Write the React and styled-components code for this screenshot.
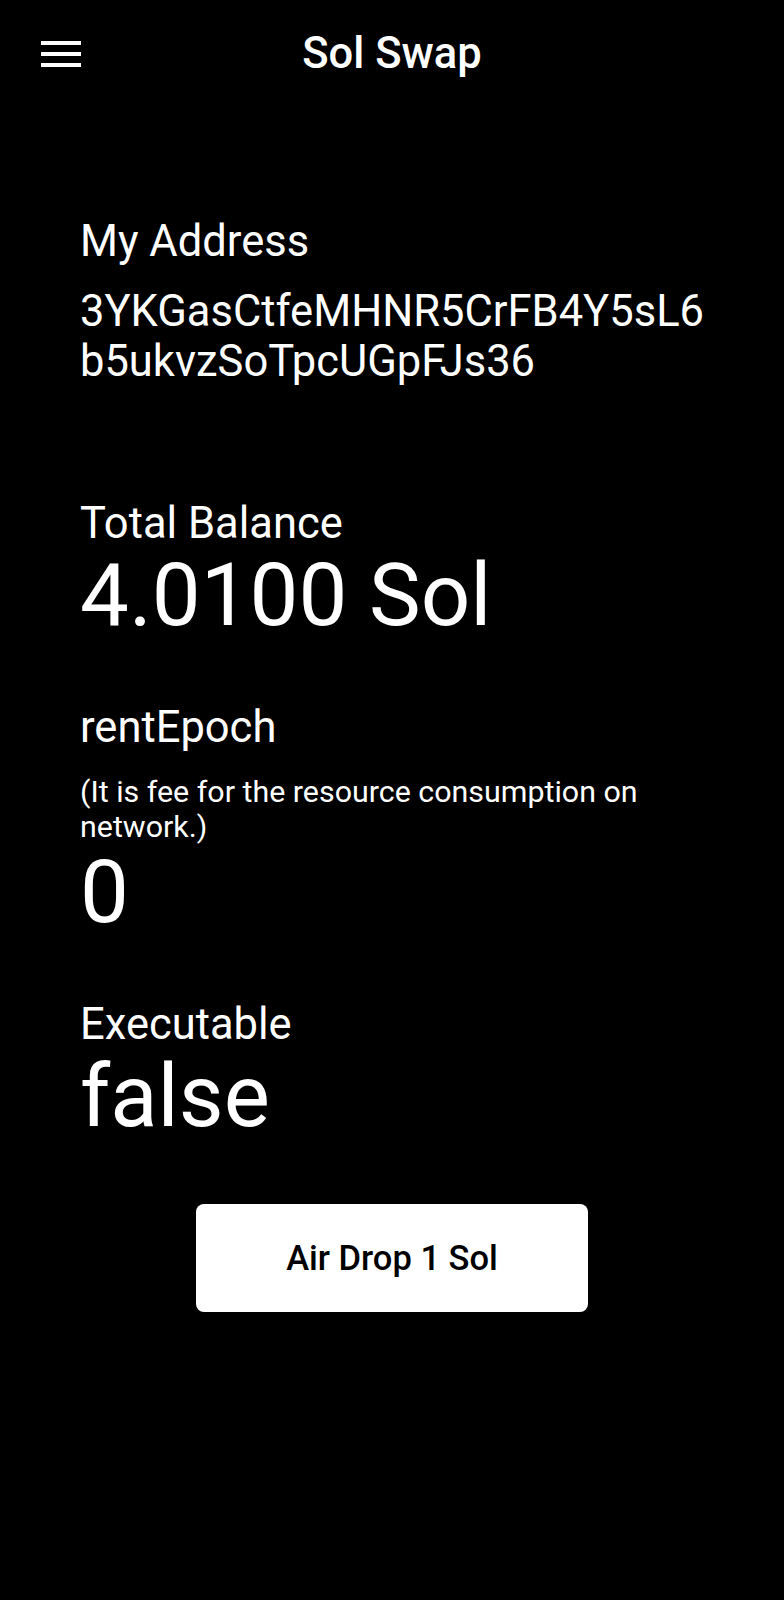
import React from "react";
import styled, { createGlobalStyle } from "styled-components";

const GlobalStyle = createGlobalStyle`
  html, body {
    margin: 0;
    padding: 0;
    background: #000000;
  }
  body {
    font-family: Roboto, "Noto Sans", "Liberation Sans", sans-serif;
    color: #ffffff;
  }
`;

const account = {
  address: "3YKGasCtfeMHNR5CrFB4Y5sL6b5ukvzSoTpcUGpFJs36",
  balance: "4.0100 Sol",
  rentEpoch: 0,
  executable: false,
};

const MenuIcon = () => (
  <svg width="40" height="26" viewBox="0 0 40 26">
    <rect x="0" y="0" width="40" height="4" fill="#fff" />
    <rect x="0" y="11" width="40" height="4" fill="#fff" />
    <rect x="0" y="22" width="40" height="4" fill="#fff" />
  </svg>
);

const App = () => {
  return (
    <Page>
      <GlobalStyle />
      <Header>
        <MenuButton aria-label="menu">
          <MenuIcon />
        </MenuButton>
        <Title>Sol Swap</Title>
      </Header>
      <Content>
        <Section $spacing="112px">
          <Label>My Address</Label>
          <Address>{account.address}</Address>
        </Section>
        <Section $spacing="64px">
          <Label>Total Balance</Label>
          <BigValue>{account.balance}</BigValue>
        </Section>
        <Section $spacing="64px">
          <Label>rentEpoch</Label>
          <Note>(It is fee for the resource consumption on network.)</Note>
          <BigValue $tight>{account.rentEpoch}</BigValue>
        </Section>
        <Section $spacing="64px">
          <Label>Executable</Label>
          <BigValue>{String(account.executable)}</BigValue>
        </Section>
        <ButtonRow>
          <AirDropButton>Air Drop 1 Sol</AirDropButton>
        </ButtonRow>
      </Content>
    </Page>
  );
};

export default App;

const Page = styled.div`
  min-height: 1600px;
  background: #000;
`;

const Header = styled.header`
  position: relative;
  height: 108px;
  display: flex;
  align-items: center;
  justify-content: center;
`;

const MenuButton = styled.button`
  position: absolute;
  left: 41px;
  top: 41px;
  padding: 0;
  border: 0;
  background: transparent;
  display: flex;
`;

const Title = styled.h1`
  margin: 0;
  font-size: 43.5px;
  font-weight: 500;
  line-height: 50px;
`;

const Content = styled.main`
  padding: 109px 66px 0 80px;
  display: flex;
  flex-direction: column;
`;

const Section = styled.section`
  display: flex;
  flex-direction: column;
  margin-bottom: ${(p) => p.$spacing};
`;

const Label = styled.div`
  font-size: 43.5px;
  line-height: 50px;
`;

const Address = styled.div`
  margin-top: 20px;
  font-size: 43.5px;
  line-height: 50px;
  word-break: break-all;
`;

const BigValue = styled.div`
  margin-top: ${(p) => (p.$tight ? "4px" : "2px")};
  font-size: 87px;
  line-height: 88px;
`;

const Note = styled.div`
  margin-top: 21px;
  font-size: 30.4px;
  line-height: 35px;
`;

const ButtonRow = styled.div`
  display: flex;
  justify-content: center;
  padding-right: 14px;
`;

const AirDropButton = styled.button`
  width: 392px;
  height: 108px;
  border: 0;
  border-radius: 8px;
  background: #ffffff;
  color: #000000;
  font-family: Roboto, "Noto Sans", sans-serif;
  font-size: 34.5px;
  font-weight: 500;
`;
